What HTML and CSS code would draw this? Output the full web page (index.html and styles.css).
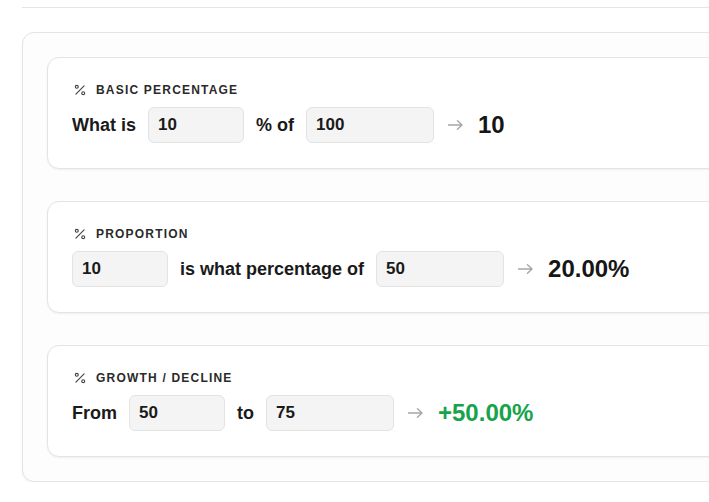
FILE: index.html
```html
<!DOCTYPE html>
<html lang="en">
<head>
  <meta charset="UTF-8">
  <meta name="viewport" content="width=device-width, initial-scale=1.0">
  <title>Percentage Calculator</title>
  <link rel="stylesheet" href="styles.css">
</head>
<body>
  <div class="page">
    <div class="topbar"></div>

    <div class="panel">
      <!-- basic percentage -->
      <div class="calc">
        <div class="calc-title">
          <svg class="pct-icon" viewBox="0 0 24 24" width="14" height="14"><line x1="19" y1="5" x2="5" y2="19"/><circle cx="6.5" cy="6.5" r="2.5"/><circle cx="17.5" cy="17.5" r="2.5"/></svg>
          <span>BASIC PERCENTAGE</span>
        </div>
        <div class="calc-row">
          <span class="word">What is</span>
          <input class="num" type="text" value="10">
          <span class="word">% of</span>
          <input class="num wide" type="text" value="100">
          <svg class="arrow" viewBox="0 0 15 10" width="15" height="10"><path d="M0.5 5H14M9.5 0.8L14 5L9.5 9.2"/></svg>
          <span class="result">10</span>
        </div>
      </div>

      <!-- proportion -->
      <div class="calc">
        <div class="calc-title">
          <svg class="pct-icon" viewBox="0 0 24 24" width="14" height="14"><line x1="19" y1="5" x2="5" y2="19"/><circle cx="6.5" cy="6.5" r="2.5"/><circle cx="17.5" cy="17.5" r="2.5"/></svg>
          <span>PROPORTION</span>
        </div>
        <div class="calc-row">
          <input class="num" type="text" value="10">
          <span class="word">is what percentage of</span>
          <input class="num wide" type="text" value="50">
          <svg class="arrow" viewBox="0 0 15 10" width="15" height="10"><path d="M0.5 5H14M9.5 0.8L14 5L9.5 9.2"/></svg>
          <span class="result">20.00%</span>
        </div>
      </div>

      <!-- growth / decline -->
      <div class="calc">
        <div class="calc-title">
          <svg class="pct-icon" viewBox="0 0 24 24" width="14" height="14"><line x1="19" y1="5" x2="5" y2="19"/><circle cx="6.5" cy="6.5" r="2.5"/><circle cx="17.5" cy="17.5" r="2.5"/></svg>
          <span>GROWTH / DECLINE</span>
        </div>
        <div class="calc-row">
          <span class="word">From</span>
          <input class="num" type="text" value="50">
          <span class="word">to</span>
          <input class="num wide" type="text" value="75">
          <svg class="arrow" viewBox="0 0 15 10" width="15" height="10"><path d="M0.5 5H14M9.5 0.8L14 5L9.5 9.2"/></svg>
          <span class="result up">+50.00%</span>
        </div>
      </div>
    </div>
  </div>
</body>
</html>
```

FILE: styles.css
```css
html, body {
  margin: 0;
  overflow: hidden;
  background: #fff;
}
body {
  font-family: "Liberation Sans", Arial, sans-serif;
  color: #1a1a1a;
}
.page {
  width: 960px;
  padding-left: 22px;
}
.topbar {
  height: 7px;
  border-bottom: 1px solid #e5e5e5;
  margin-bottom: 24px;
}
.panel {
  background: #fdfdfd;
  border: 1px solid #e4e4e4;
  border-radius: 12px;
  box-shadow: 0 1px 2px rgba(0, 0, 0, 0.05);
  padding: 24px;
  display: flex;
  flex-direction: column;
  gap: 32px;
}
.calc {
  background: #fff;
  border: 1px solid #e4e4e4;
  border-radius: 12px;
  box-shadow: 0 1px 2px rgba(0, 0, 0, 0.06);
  padding: 24px 24px 25px;
}
.calc-title {
  display: flex;
  align-items: center;
  gap: 9px;
  height: 16px;
  font-size: 12px;
  font-weight: bold;
  letter-spacing: 0.1em;
  color: #2a2a2a;
  margin-bottom: 9px;
}
.pct-icon {
  fill: none;
  stroke: #444;
  stroke-width: 2;
  stroke-linecap: round;
  margin-left: 1px;
}
.calc-row {
  display: flex;
  align-items: center;
  gap: 12px;
  height: 36px;
}
.word {
  font-size: 18px;
  font-weight: bold;
  color: #1a1a1a;
}
.num {
  box-sizing: border-box;
  width: 96px;
  height: 36px;
  padding: 0 9px;
  background: #f4f4f4;
  border: 1px solid #e3e3e3;
  border-radius: 6px;
  font-family: "Liberation Sans", Arial, sans-serif;
  font-size: 17px;
  font-weight: bold;
  color: #1a1a1a;
  outline: none;
}
.num.wide {
  width: 128px;
}
.arrow {
  fill: none;
  stroke: #a6a6a6;
  stroke-width: 1.4;
  stroke-linecap: round;
  stroke-linejoin: round;
  margin-left: 2px;
}
.result {
  font-size: 24px;
  font-weight: bold;
  color: #161616;
  margin-left: 3px;
}
.result.up {
  color: #16a34a;
}
```
